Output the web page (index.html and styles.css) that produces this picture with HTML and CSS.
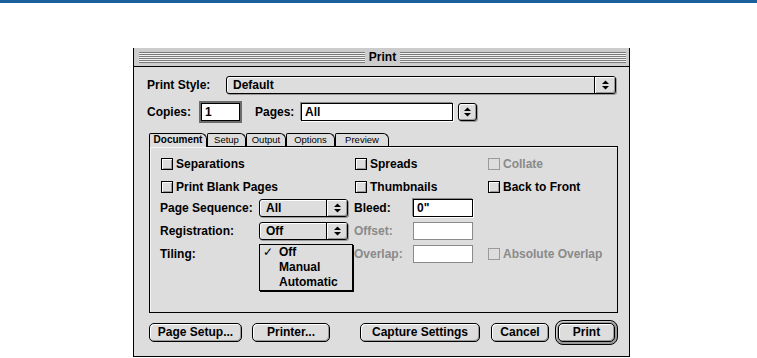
FILE: index.html
```html
<!DOCTYPE html>
<html lang="en">
<head>
    <meta charset="UTF-8">
    <meta name="viewport" content="width=device-width, initial-scale=1.0">
    <title>Print</title>
    <link rel="stylesheet" href="styles.css">
</head>
<body>

<div class="topbar"></div>

<div class="window">
    <div class="titlebar">
        <span class="stripes"></span>
        <span class="title">Print</span>
        <span class="stripes"></span>
    </div>

    <div class="content">
        <div class="row">
            <span class="label style-label">Print Style:</span>
            <div class="popup popup-wide">
                <span class="popup-value">Default</span>
                <span class="popup-arrows">
                    <svg width="7" height="10" viewBox="0 0 7 10"><polygon points="0,4 3.5,0.5 7,4"/><polygon points="0,6 3.5,9.5 7,6"/></svg>
                </span>
            </div>
        </div>

        <div class="row copies-row">
            <span class="label copies-label">Copies:</span>
            <span class="field focus copies-field">1</span>
            <span class="label pages-label">Pages:</span>
            <span class="field pages-field">All</span>
            <span class="stepper">
                <svg width="7" height="10" viewBox="0 0 7 10"><polygon points="0,4 3.5,0.5 7,4"/><polygon points="0,6 3.5,9.5 7,6"/></svg>
            </span>
        </div>

        <div class="tabs">
            <span class="tab active" style="width: 58px">Document</span>
            <span class="tab" style="width: 39px">Setup</span>
            <span class="tab" style="width: 40px">Output</span>
            <span class="tab" style="width: 49px">Options</span>
            <span class="tab" style="width: 54px">Preview</span>
        </div>

        <div class="pane">
            <label class="check-item span-ab"><span class="check"></span>Separations</label>
            <label class="check-item span-cd"><span class="check"></span>Spreads</label>
            <label class="check-item col-e disabled"><span class="check"></span>Collate</label>

            <label class="check-item span-ab"><span class="check"></span>Print Blank Pages</label>
            <label class="check-item span-cd"><span class="check"></span>Thumbnails</label>
            <label class="check-item col-e"><span class="check"></span>Back to Front</label>

            <span class="label">Page Sequence:</span>
            <div class="popup popup-small">
                <span class="popup-value">All</span>
                <span class="popup-arrows">
                    <svg width="7" height="10" viewBox="0 0 7 10"><polygon points="0,4 3.5,0.5 7,4"/><polygon points="0,6 3.5,9.5 7,6"/></svg>
                </span>
            </div>
            <span class="label">Bleed:</span>
            <span class="field small-field">0"</span>
            <span></span>

            <span class="label">Registration:</span>
            <div class="popup popup-small">
                <span class="popup-value">Off</span>
                <span class="popup-arrows">
                    <svg width="7" height="10" viewBox="0 0 7 10"><polygon points="0,4 3.5,0.5 7,4"/><polygon points="0,6 3.5,9.5 7,6"/></svg>
                </span>
            </div>
            <span class="label disabled">Offset:</span>
            <span class="field small-field disabled"></span>
            <span></span>

            <span class="label">Tiling:</span>
            <div class="menu">
                <div class="menu-item"><span class="mark">&#10003;</span>Off</div>
                <div class="menu-item"><span class="mark"></span>Manual</div>
                <div class="menu-item"><span class="mark"></span>Automatic</div>
            </div>
            <span class="label disabled">Overlap:</span>
            <span class="field small-field disabled"></span>
            <label class="check-item disabled"><span class="check"></span>Absolute Overlap</label>
        </div>

        <div class="buttons">
            <div class="btn-group">
                <span class="btn" style="width: 93px">Page Setup...</span>
                <span class="btn" style="width: 78px">Printer...</span>
            </div>
            <div class="btn-group right-group">
                <span class="btn" style="width: 120px">Capture Settings</span>
                <span class="btn" style="width: 58px">Cancel</span>
                <span class="ring"><span class="btn" style="width: 57px">Print</span></span>
            </div>
        </div>
    </div>
</div>

</body>
</html>
```

FILE: styles.css
```css
body {
    margin: 0;
    background-color: #fff;
    font-family: "Liberation Sans", Arial, sans-serif;
    font-size: 12px;
    font-weight: bold;
    color: #000;
}

.topbar {
    height: 3px;
    background-color: #1c5f9d;
}

.window {
    width: 497px;
    box-sizing: border-box;
    margin: 45px 0 0 133px;
    background-color: #dddddd;
    border-left: 1px solid #000;
    border-right: 1px solid #000;
    border-bottom: 1px solid #000;
}

.titlebar {
    height: 18px;
    display: flex;
    align-items: center;
    padding: 0 3px 0 5px;
    background-color: #cccccc;
    border-bottom: 1px solid #000;
}
.titlebar .stripes {
    flex: 1;
    height: 11px;
    background: repeating-linear-gradient(to bottom, #7c7c7c 0 1px, #f2f2f2 1px 2px);
}
.titlebar .title {
    padding: 0 4px;
    line-height: 18px;
}

.content {
    padding: 9px 11px 11px 15px;
}

.row {
    display: flex;
    align-items: center;
    height: 18px;
}
.copies-row {
    margin-top: 9px;
}

.label {
    line-height: 18px;
    white-space: nowrap;
}
.label.disabled {
    color: #8a8a8a;
}
.style-label {
    width: 79px;
    margin-left: -2px;
}
.copies-label {
    width: 54px;
    margin-left: -2px;
}
.pages-label {
    width: 46px;
    margin-left: 15px;
}

/* popup menus */
.popup {
    height: 18px;
    box-sizing: border-box;
    display: flex;
    border: 1px solid #000;
    border-radius: 3px;
    background-color: #dddddd;
    box-shadow: inset 1px 1px 0 #fff, 1px 1px 0 #9a9a9a;
}
.popup-wide {
    flex: 1;
    margin-right: 2px;
}
.popup-small {
    width: 89px;
}
.popup-value {
    flex: 1;
    padding-left: 6px;
    line-height: 16px;
}
.popup-arrows {
    width: 20px;
    display: flex;
    align-items: center;
    justify-content: center;
    border-left: 1px solid #000;
    border-radius: 0 2px 2px 0;
    box-shadow: inset 1px 1px 0 #fff, inset -1px -1px 0 #9a9a9a;
}

.stepper {
    width: 19px;
    height: 18px;
    box-sizing: border-box;
    margin-left: 5px;
    display: flex;
    align-items: center;
    justify-content: center;
    border: 1px solid #000;
    border-radius: 3px;
    box-shadow: inset 1px 1px 0 #fff, inset -1px -1px 0 #9a9a9a, 1px 1px 0 #9a9a9a;
}

/* edit fields */
.field {
    height: 18px;
    box-sizing: border-box;
    padding-left: 3px;
    line-height: 16px;
    background-color: #fff;
    border: 1px solid #000;
    box-shadow: -1px -1px 0 #8a8a8a, 1px 1px 0 #fff;
}
.field.focus {
    box-shadow: 0 0 0 2px #6b6b6b;
}
.field.disabled {
    border-color: #8a8a8a;
    box-shadow: none;
}
.copies-field {
    width: 39px;
}
.pages-field {
    width: 152px;
}
.small-field {
    width: 60px;
}

/* tabs */
.tabs {
    display: flex;
    align-items: flex-end;
    height: 13px;
    margin-top: 12px;
}
.tab {
    height: 13px;
    box-sizing: border-box;
    border: 1px solid #000;
    border-bottom: none;
    border-radius: 2px 6px 0 0;
    text-align: center;
    font-size: 9.5px;
    font-weight: normal;
    line-height: 12px;
}
.tab.active {
    position: relative;
    z-index: 1;
    height: 14px;
    margin-bottom: -1px;
    background-color: #dddddd;
    font-size: 10px;
    font-weight: bold;
}

.pane {
    height: 167px;
    box-sizing: border-box;
    padding: 8px 0 0 10px;
    border: 1px solid #000;
    box-shadow: inset 1px 1px 0 #f4f4f4;
    display: grid;
    grid-template-columns: 99px 95px 59px 74px 1fr;
    grid-template-rows: 23px 21px 23px 23px 1fr;
    align-items: start;
}
.span-ab {
    grid-column: 1 / 3;
}
.span-cd {
    grid-column: 3 / 5;
}
.col-e {
    grid-column: 5;
}

.check-item {
    display: flex;
    align-items: center;
    height: 18px;
    white-space: nowrap;
}
.check {
    width: 12px;
    height: 12px;
    box-sizing: border-box;
    margin: 0 3px 0 1px;
    border: 1px solid #000;
    background-color: #dddddd;
    box-shadow: inset 1px 1px 0 #fff, inset -1px -1px 0 #9a9a9a;
}
.check-item.disabled {
    color: #8a8a8a;
}
.check-item.disabled .check {
    border-color: #9a9a9a;
    box-shadow: none;
}

/* open menu */
.menu {
    width: 94px;
    box-sizing: border-box;
    margin-top: -1px;
    background-color: #dddddd;
    border: 1px solid #000;
    box-shadow: 1px 1px 0 #000;
    position: relative;
    z-index: 2;
}
.menu-item {
    display: flex;
    height: 15px;
    line-height: 15px;
}
.menu-item .mark {
    width: 16px;
    padding-left: 3px;
    font-weight: normal;
}

/* buttons */
.buttons {
    display: flex;
    justify-content: space-between;
    align-items: center;
    margin-top: 7px;
    height: 25px;
}
.btn-group {
    display: flex;
    align-items: center;
    gap: 10px;
}
.right-group {
    gap: 0;
}
.right-group .btn + .btn {
    margin-left: 11px;
}
.right-group .ring {
    margin-left: 6px;
}
.btn {
    display: block;
    height: 19px;
    box-sizing: border-box;
    border: 1px solid #000;
    border-radius: 5px;
    background-color: #dddddd;
    box-shadow: inset 1px 1px 0 #fff, inset -1px -1px 0 #9a9a9a;
    text-align: center;
    line-height: 17px;
}
.ring {
    display: block;
    padding: 2px;
    border: 1px solid #000;
    border-radius: 8px;
    background-color: #9a9a9a;
    box-shadow: inset 1px 1px 0 #cfcfcf;
}
```
